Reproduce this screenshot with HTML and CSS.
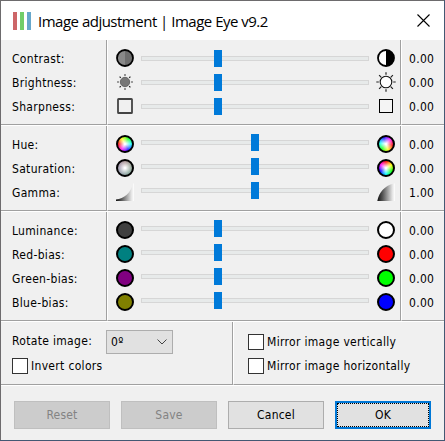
FILE: index.html
```html
<!DOCTYPE html>
<html lang="en">
<head>
    <meta charset="UTF-8">
    <title>Image adjustment | Image Eye v9.2</title>
    <link rel="stylesheet" href="styles.css">
</head>
<body>
    <div class="window">
        <header class="titlebar">
            <div class="logo"><i></i><i></i><i></i></div>
            <h1>Image adjustment | Image Eye v9.2</h1>
            <svg class="close" width="13" height="13" viewBox="0 0 13 13"><path d="M.5 .5l12 12M12.5 .5l-12 12"/></svg>
        </header>

        <section class="group tone">
            <div class="labels">
                <div>Contrast:</div>
                <div>Brightness:</div>
                <div>Sharpness:</div>
            </div>
            <div class="sliders">
                <div class="row">
                    <svg class="icon" viewBox="0 0 18 18"><circle cx="9" cy="9" r="8" fill="#898989"/><path d="M9 1a8 8 0 0 1 0 16z" fill="#6e6e6e"/><circle cx="9" cy="9" r="8" fill="none" stroke="#000" stroke-width="1.8"/></svg>
                    <div class="track"><b class="thumb"></b></div>
                    <svg class="icon" viewBox="0 0 18 18"><circle cx="9" cy="9" r="8" fill="#fff"/><path d="M9 1a8 8 0 0 1 0 16z"/><circle cx="9" cy="9" r="8" fill="none" stroke="#000" stroke-width="1.8"/></svg>
                </div>
                <div class="row">
                    <svg class="icon" viewBox="0 0 18 18"><circle cx="9" cy="9" r="4.7" fill="#777" stroke="#555" stroke-width=".8"/><path d="M9 1.2v1.6M9 15.2v1.6M1.2 9h1.6M15.2 9h1.6M3.6 3.6l1.2 1.2M13.2 13.2l1.2 1.2M3.6 14.4l1.2-1.2M13.2 4.8l1.2-1.2" stroke="#222" stroke-width="1.2"/></svg>
                    <div class="track"><b class="thumb"></b></div>
                    <svg class="icon sun" viewBox="0 0 20 20"><circle cx="10" cy="10" r="5.8" fill="#fff" stroke="#111" stroke-width="1.1"/><path d="M10 .3v2.5M10 17.2v2.5M.3 10h2.5M17.2 10h2.5M3.1 3.1l2.2 2.2M14.7 14.7l2.2 2.2M3.1 16.9l2.2-2.2M14.7 5.3l2.2-2.2" stroke="#222" stroke-width="1.2"/></svg>
                </div>
                <div class="row">
                    <svg class="icon" viewBox="0 0 18 18"><rect x="2" y="2" width="14" height="14" rx=".6" fill="#f0f0f0" stroke="#444" stroke-width="1.8"/></svg>
                    <div class="track"><b class="thumb"></b></div>
                    <svg class="icon" viewBox="0 0 18 18"><rect x="2.5" y="2.5" width="13" height="13" fill="#f4f4f4" stroke="#000"/></svg>
                </div>
            </div>
            <div class="values"><div>0.00</div><div>0.00</div><div>0.00</div></div>
        </section>

        <section class="group color">
            <div class="labels">
                <div>Hue:</div>
                <div>Saturation:</div>
                <div>Gamma:</div>
            </div>
            <div class="sliders">
                <div class="row">
                    <i class="dot wheel-left"></i>
                    <div class="track"><b class="thumb center"></b></div>
                    <i class="dot wheel-right"></i>
                </div>
                <div class="row">
                    <i class="dot wheel-gray"></i>
                    <div class="track"><b class="thumb center"></b></div>
                    <i class="dot wheel-full"></i>
                </div>
                <div class="row">
                    <svg class="icon" viewBox="0 0 18 18">
                        <defs><linearGradient id="ramp"><stop offset="0" stop-color="#111"/><stop offset=".3" stop-color="#555"/><stop offset=".85" stop-color="#e4e4e4"/><stop offset="1" stop-color="#fff"/></linearGradient></defs>
                        <path d="M0 18v-1.5C8 15.500 15 10 17 .5h1V18z" fill="url(#ramp)"/>
                    </svg>
                    <div class="track"><b class="thumb center"></b></div>
                    <svg class="icon" viewBox="0 0 18 18"><path d="M.3 18C2 9.500 7 3 17 .5h1V18z" fill="url(#ramp)"/></svg>
                </div>
            </div>
            <div class="values"><div>0.00</div><div>0.00</div><div>1.00</div></div>
        </section>

        <section class="group bias">
            <div class="labels">
                <div>Luminance:</div>
                <div>Red-bias:</div>
                <div>Green-bias:</div>
                <div>Blue-bias:</div>
            </div>
            <div class="sliders">
                <div class="row"><i class="dot dark"></i><div class="track"><b class="thumb"></b></div><i class="dot white"></i></div>
                <div class="row"><i class="dot teal"></i><div class="track"><b class="thumb"></b></div><i class="dot red"></i></div>
                <div class="row"><i class="dot purple"></i><div class="track"><b class="thumb"></b></div><i class="dot green"></i></div>
                <div class="row"><i class="dot olive"></i><div class="track"><b class="thumb"></b></div><i class="dot blue"></i></div>
            </div>
            <div class="values"><div>0.00</div><div>0.00</div><div>0.00</div><div>0.00</div></div>
        </section>

        <section class="options">
            <div class="rotate">
                <div class="rotate-row">
                    <span>Rotate image:</span>
                    <div class="select">0º<svg width="10" height="6" viewBox="0 0 10 6"><path d="M.5 .5L5 5 9.500 .5"/></svg></div>
                </div>
                <label class="check"><i class="box"></i>Invert colors</label>
            </div>
            <div class="mirror">
                <label class="check"><i class="box"></i>Mirror image vertically</label>
                <label class="check"><i class="box"></i>Mirror image horizontally</label>
            </div>
        </section>

        <footer class="buttons">
            <button disabled>Reset</button>
            <button disabled>Save</button>
            <button>Cancel</button>
            <button class="default"><span>OK</span></button>
        </footer>
    </div>
</body>
</html>
```
FILE: styles.css
```css
* {
    box-sizing: border-box;
    margin: 0;
    padding: 0;
}

body {
    width: 445px;
    height: 441px;
    overflow: hidden;
    background: #435873;
    font-family: "DejaVu Sans Condensed", "DejaVu Sans", sans-serif;
    font-stretch: condensed;
    font-size: 12px;
    letter-spacing: 0.32px;
    color: #000;
}

.window {
    width: 444px;
    height: 440px;
    background: #f0f0f0;
    border: solid #6d6b6d;
    border-width: 1px 0 0 1px;
}

.titlebar {
    display: flex;
    align-items: center;
    height: 39px;
    padding: 0 14px 0 12px;
    background: #fff;
}

.logo {
    display: flex;
    gap: 3px;
    margin: -10px 7px 0 0;
}

.logo i {
    width: 4px;
    height: 18px;
    margin-top: 10px;
    background: #cd6668;
}

.logo i:nth-child(2) {
    background: #72cd69;
}

.logo i:nth-child(3) {
    background: #67a7cb;
}

h1 {
    font: 15px/20px "Open Sans", sans-serif;
    letter-spacing: -0.5px;
    white-space: nowrap;
}

.close {
    margin-left: auto;
}

.close path {
    stroke: #000;
    stroke-width: 1.1;
}

/* etched separators: gray line followed by a white one */
.group {
    display: grid;
    grid-template-columns: 106px 294px 1fr;
    height: 86px;
    border-bottom: 1px solid #fff;
}

.bias {
    height: 110px;
}

.group > div {
    padding-top: 6px;
    border-bottom: 1px solid #a0a0a0;
}

.labels,
.sliders {
    border-right: 1px solid #a0a0a0;
}

.sliders,
.values {
    border-left: 1px solid #fff;
}

.labels > div,
.values > div {
    height: 24px;
    line-height: 26px;
    white-space: nowrap;
}

.group .labels {
    padding-left: 11px;
}

.group .values {
    padding-left: 7px;
}

.row {
    display: flex;
    align-items: center;
    height: 24px;
    padding-left: 8px;
}

.icon {
    width: 18px;
    height: 18px;
}

.sun {
    width: 20px;
    height: 20px;
    margin: 0 -1px;
}

.track {
    position: relative;
    width: 228px;
    height: 5px;
    margin: 0 8px 0 7px;
    background: #e7eaea;
    border: 1px solid #d6d6d6;
}

.tone .track {
    margin-top: 1px;
}

.color .track,
.bias .track {
    margin-top: -3px;
}

.thumb {
    position: absolute;
    left: 72px;
    top: -7px;
    width: 8px;
    height: 17px;
    background: #007ad9;
}

.thumb.center {
    left: 109px;
}

.dot {
    width: 18px;
    height: 18px;
    border: 2px solid #000;
    border-radius: 50%;
}

.dark { background: #404040; }
.white { background: #fff; }
.teal { background: #008080; }
.red { background: #f00; }
.purple { background: #800080; }
.green { background: #0f0; }
.olive { background: #808000; }
.blue { background: #00f; }

.wheel-left {
    background: radial-gradient(circle, #fff 5%, transparent 60%) border-box, conic-gradient(from 270deg, red, yellow, lime, cyan, blue, magenta, red) border-box;
}

.wheel-right {
    background: radial-gradient(circle, #fff 5%, transparent 60%) border-box, conic-gradient(from 100deg, red, yellow, lime, cyan, blue, magenta, red) border-box;
}

.wheel-full {
    background: radial-gradient(circle, #fff 5%, transparent 55%) border-box, conic-gradient(from 0deg, red, yellow, lime, cyan, blue, magenta, red) border-box;
}

.wheel-gray {
    background: radial-gradient(circle, #fff 5%, transparent 65%) border-box, conic-gradient(#997f7f, #7f8f7f, #668c7f, #7f8c99, #8c7f99, #997f7f) border-box;
}

.options {
    display: grid;
    grid-template-columns: 232px 1fr;
    height: 64px;
    border-bottom: 1px solid #fff;
}

.rotate,
.mirror {
    border-bottom: 1px solid #a0a0a0;
}

.rotate {
    padding: 8px 0 0 11px;
    border-right: 1px solid #a0a0a0;
}

.mirror {
    padding: 8px 0 0 14px;
    border-left: 1px solid #fff;
}

.rotate-row {
    display: flex;
    height: 24px;
}

.rotate-row span {
    width: 94px;
    line-height: 23px;
}

.select {
    display: flex;
    align-items: center;
    justify-content: space-between;
    width: 67px;
    height: 24px;
    padding: 0 5px 0 4px;
    background: #e1e1e1;
    border: 1px solid #adadad;
}

.select path {
    fill: none;
    stroke: #444;
}

.check {
    display: flex;
    align-items: center;
    gap: 3px;
    height: 24px;
    white-space: nowrap;
}

.box {
    width: 16px;
    height: 16px;
    background: #fff;
    border: 1px solid #333;
}

.buttons {
    display: flex;
    gap: 11px;
    padding: 15px 0 0 13px;
}

button {
    width: 96px;
    height: 28px;
    font: inherit;
    letter-spacing: 0.2px;
    color: #000;
    background: #e1e1e1;
    border: 1px solid #adadad;
}

button:disabled {
    color: #838383;
    background: #ccc;
    border-color: #bfbfbf;
}

button.default {
    border: 2px solid #0078d7;
}

.default span {
    display: block;
    height: 24px;
    line-height: 22px;
    border: 1px dotted #000;
}
```
